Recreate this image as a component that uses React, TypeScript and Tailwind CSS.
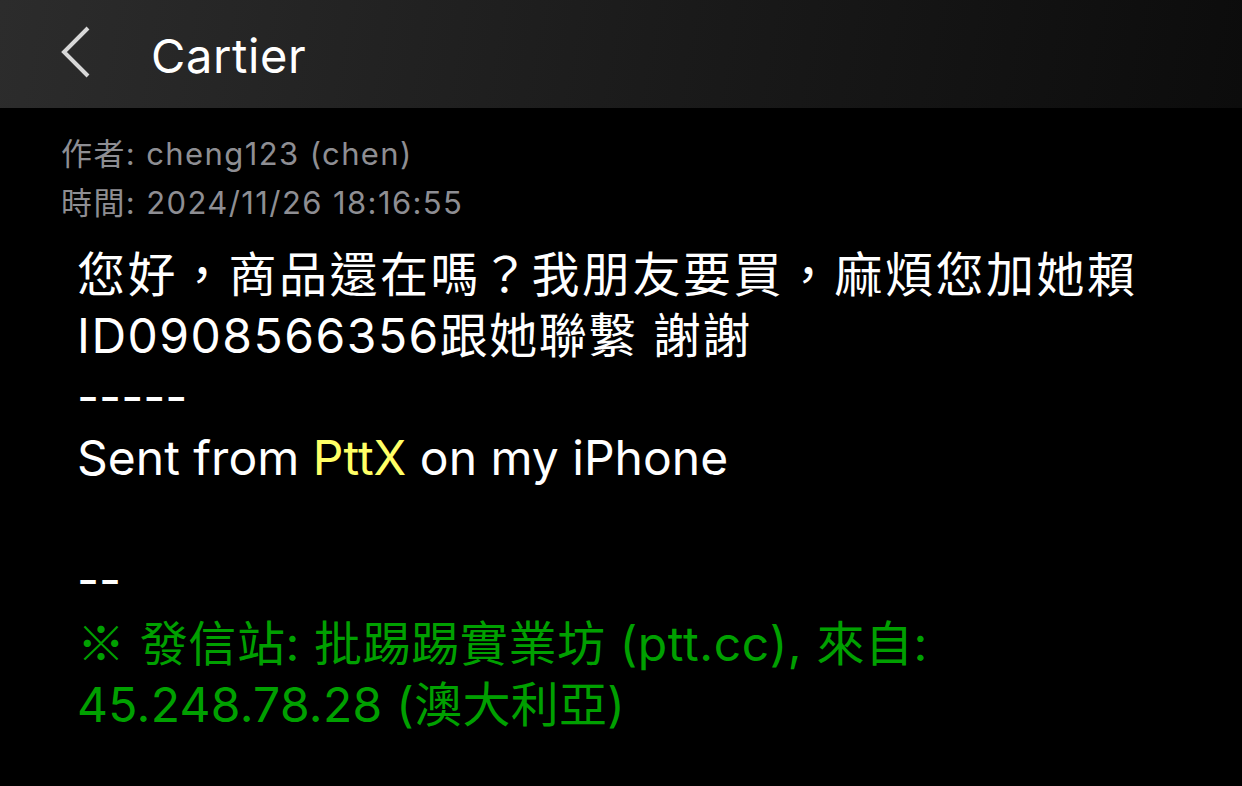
import React from "react";

const sans = "font-['Inter','Noto_Sans_CJK_TC',sans-serif]";

export default function App() {
  return (
    <div className={`w-[1242px] h-[786px] bg-black overflow-hidden ${sans}`}>
      <header className="h-[108px] bg-[linear-gradient(100deg,#2c2c2c_0%,#1a1a1a_55%,#0c0c0c_100%)] flex items-center">
        <svg width="40" height="60" viewBox="0 0 40 60" className="ml-[55px]">
          <path d="M33 4 L9 28 L33 52" fill="none" stroke="#d8d8d8" strokeWidth="4" strokeLinecap="butt" />
        </svg>
        <h1 className="ml-[56px] mt-[3px] text-white text-[47px] leading-none font-normal tracking-[0.6px]">Cartier</h1>
      </header>
      <main className="pt-[21px]">
        <div className="pl-[61px] text-[#8e8e93] text-[31px] leading-[49px] tracking-[1.4px]">
          <div>作者: cheng123 (chen)</div>
          <div>時間: 2024/11/26 18:16:55</div>
        </div>
        <div className="pl-[77px] pt-[17px] text-white text-[48px] leading-[61px]">
          <div className="tracking-[2.5px]">您好，商品還在嗎？我朋友要買，麻煩您加她賴</div>
          <div className="tracking-[1.5px]">ID0908566356跟她聯繫 謝謝</div>
          <div>-----</div>
          <div>
            Sent from <span className="text-[#ffff66]">PttX</span> on my iPhone
          </div>
          <div className="h-[61px]" />
          <div>--</div>
          <div className="text-[#00a000]">
            <div className="whitespace-nowrap tracking-[0.6px]">
              <span className="font-['Noto_Sans_CJK_TC',sans-serif]">※</span> 發信站: 批踢踢實業坊 (ptt.cc), 來自:
            </div>
            <div className="whitespace-nowrap tracking-[0.3px]">45.248.78.28 (澳大利亞)</div>
          </div>
        </div>
      </main>
    </div>
  );
}
